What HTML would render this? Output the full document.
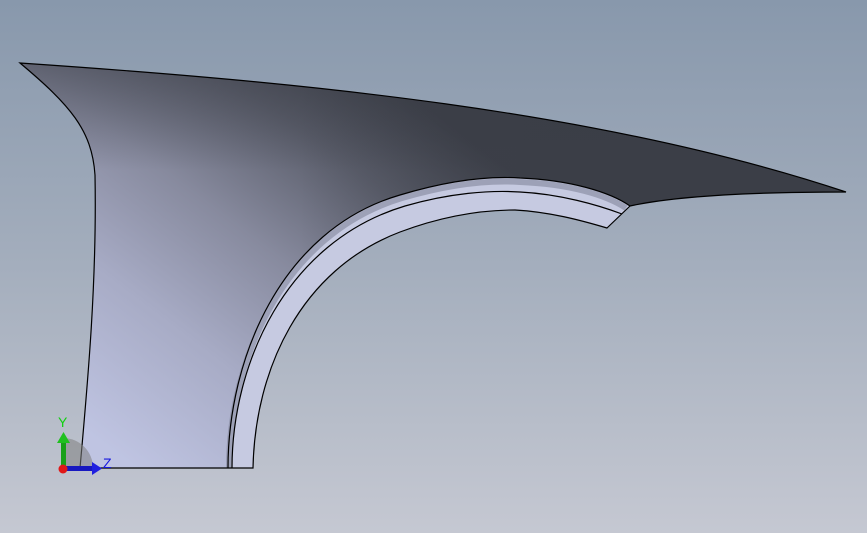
<!DOCTYPE html>
<html><head><style>
html,body{margin:0;padding:0;width:867px;height:533px;overflow:hidden}
</style></head><body>
<svg width="867" height="533" viewBox="0 0 867 533" xmlns="http://www.w3.org/2000/svg">
<defs>
<linearGradient id="bg" x1="0" y1="0" x2="0" y2="1">
<stop offset="0" stop-color="#8898ac"/>
<stop offset="0.5" stop-color="#a4aebd"/>
<stop offset="1" stop-color="#c5c8d2"/>
</linearGradient>
<linearGradient id="fg" gradientUnits="userSpaceOnUse" x1="110" y1="450" x2="390" y2="80">
<stop offset="0" stop-color="#bfc4e2"/>
<stop offset="0.3" stop-color="#a7abc5"/>
<stop offset="0.55" stop-color="#878a9e"/>
<stop offset="0.8" stop-color="#5a5d6a"/>
<stop offset="1" stop-color="#3c3f48"/>
</linearGradient>
<linearGradient id="tg" gradientUnits="userSpaceOnUse" x1="0" y1="65" x2="0" y2="170">
<stop offset="0" stop-color="#3a3d46" stop-opacity="0.5"/>
<stop offset="1" stop-color="#3a3d46" stop-opacity="0"/>
</linearGradient>
<linearGradient id="rg" gradientUnits="userSpaceOnUse" x1="300" y1="0" x2="650" y2="0">
<stop offset="0" stop-color="#3a3d46" stop-opacity="0"/>
<stop offset="1" stop-color="#3a3d46" stop-opacity="0.6"/>
</linearGradient>
</defs>
<rect width="867" height="533" fill="url(#bg)"/>
<path id="f" d="M20,63 C300,82 600,110 846,192 C760,192 680,195 630,206 L607,228 C580,220 550,212 515,210 C480,210 440,217 400,232 C300,270 255,370 253,468 L80,468 C88,380 97,280 95,175 C92,130 70,105 20,63 Z" fill="url(#fg)"/>
<path d="M20,63 C300,82 600,110 846,192 C760,192 680,195 630,206 L607,228 C580,220 550,212 515,210 C480,210 440,217 400,232 C300,270 255,370 253,468 L80,468 C88,380 97,280 95,175 C92,130 70,105 20,63 Z" fill="url(#tg)"/>
<path d="M20,63 C300,82 600,110 846,192 C760,192 680,195 630,206 L607,228 C580,220 550,212 515,210 C480,210 440,217 400,232 C300,270 255,370 253,468 L80,468 C88,380 97,280 95,175 C92,130 70,105 20,63 Z" fill="url(#rg)"/>
<!-- lip -->
<path d="M228,468 C228,360 280,230 400,195 C450,180 490,176 520,178 C570,180 610,192 630,206 L607,228 C580,220 550,212 515,210 C480,210 440,217 400,232 C300,270 255,370 253,468 Z" fill="#c6cae1"/>
<path d="M229,468 C229,362 282,234 402,198 C450,184 490,180 520,182 C570,184 606,195 626,208" fill="none" stroke="#7c8096" stroke-width="6" stroke-opacity="0.55"/>
<g fill="none" stroke="#000" stroke-width="1.2">
<path d="M20,63 C300,82 600,110 846,192 C760,192 680,195 630,206 L607,228 C580,220 550,212 515,210 C480,210 440,217 400,232 C300,270 255,370 253,468 L80,468 C88,380 97,280 95,175 C92,130 70,105 20,63 Z"/>
<path d="M228,468 C228,360 280,230 400,195 C450,180 490,176 520,178 C570,180 610,192 630,206"/>
<path d="M232,468 C232,365 285,242 405,206 C450,193 490,190 520,192 C560,194 598,205 622,214"/>
</g>
<!-- axis -->
<path d="M63,468 L63,438 A30,30 0 0 1 93,468 Z" fill="#808080" fill-opacity="0.55"/>
<rect x="61" y="441" width="5" height="27" fill="#18a018"/>
<path d="M57,443 L63.5,432 L70,443 Z" fill="#20c020"/>
<rect x="63" y="466" width="30" height="5" fill="#1818c0"/>
<path d="M92,462 L102,468.5 L92,475 Z" fill="#2020e0"/>
<circle cx="63" cy="469" r="4.5" fill="#e01818"/>
<text x="58" y="427" font-family="Liberation Sans, sans-serif" font-size="14" fill="#10d010">Y</text>
<text x="103" y="468" font-family="Liberation Sans, sans-serif" font-size="14" fill="#1818e0">Z</text>
</svg>
</body></html>
